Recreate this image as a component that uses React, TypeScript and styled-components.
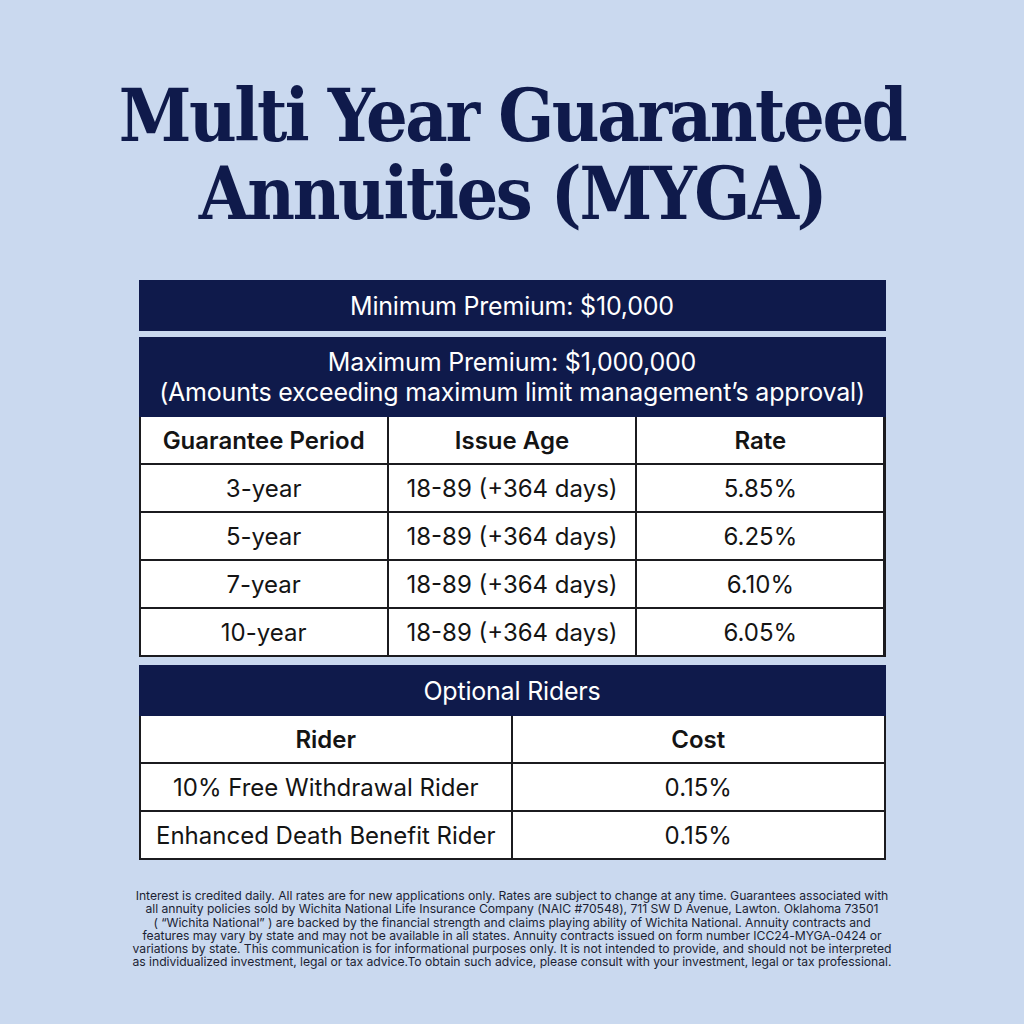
import styled, { createGlobalStyle } from 'styled-components';

const GlobalStyle = createGlobalStyle`
  html, body {
    margin: 0;
    padding: 0;
    background: #cad9ef;
  }
`;

const rates = [
  { period: '3-year', age: '18-89 (+364 days)', rate: '5.85%' },
  { period: '5-year', age: '18-89 (+364 days)', rate: '6.25%' },
  { period: '7-year', age: '18-89 (+364 days)', rate: '6.10%' },
  { period: '10-year', age: '18-89 (+364 days)', rate: '6.05%' },
];

const riders = [
  { name: '10% Free Withdrawal Rider', cost: '0.15%' },
  { name: 'Enhanced Death Benefit Rider', cost: '0.15%' },
];

const disclaimer = [
  'Interest is credited daily. All rates are for new applications only. Rates are subject to change at any time. Guarantees associated with',
  'all annuity policies sold by Wichita National Life Insurance Company (NAIC #70548), 711 SW D Avenue, Lawton. Oklahoma 73501',
  '( “Wichita National” ) are backed by the financial strength and claims playing ability of Wichita National. Annuity contracts and',
  'features may vary by state and may not be available in all states. Annuity contracts issued on form number ICC24-MYGA-0424 or',
  'variations by state. This communication is for informational purposes only. It is not intended to provide, and should not be interpreted',
  'as individualized investment, legal or tax advice.To obtain such advice, please consult with your investment, legal or tax professional.',
];

const App = () => {
  return (
    <>
      <GlobalStyle />
      <Page>
        <Title>
          Multi Year Guaranteed
          <br />
          Annuities (MYGA)
        </Title>
        <Tables>
          <NavyBar>Minimum Premium: $10,000</NavyBar>
          <Block>
            <NavyBar $tall>
              Maximum Premium: $1,000,000
              <br />
              (Amounts exceeding maximum limit management’s approval)
            </NavyBar>
            <Grid $cols={3}>
              <HeadCell>Guarantee Period</HeadCell>
              <HeadCell>Issue Age</HeadCell>
              <HeadCell>Rate</HeadCell>
              {rates.map((r) => (
                <Row key={r.period}>
                  <Cell>{r.period}</Cell>
                  <Cell>{r.age}</Cell>
                  <Cell>{r.rate}</Cell>
                </Row>
              ))}
            </Grid>
          </Block>
          <Block $gap>
            <NavyBar>Optional Riders</NavyBar>
            <Grid $cols={2}>
              <HeadCell>Rider</HeadCell>
              <HeadCell>Cost</HeadCell>
              {riders.map((r) => (
                <Row key={r.name}>
                  <Cell>{r.name}</Cell>
                  <Cell>{r.cost}</Cell>
                </Row>
              ))}
            </Grid>
          </Block>
        </Tables>
        <Disclaimer>
          {disclaimer.map((line) => (
            <div key={line}>{line}</div>
          ))}
        </Disclaimer>
      </Page>
    </>
  );
};

export default App;

const Page = styled.div`
  width: 1024px;
  height: 1024px;
  box-sizing: border-box;
  padding-top: 76px;
  display: flex;
  flex-direction: column;
  align-items: center;
  background: #cad9ef;
  font-family: Inter, Lato, sans-serif;
`;

const Title = styled.h1`
  margin: 0;
  font-family: 'DejaVu Serif', serif;
  font-stretch: condensed;
  font-weight: 700;
  font-size: 73px;
  line-height: 78px;
  letter-spacing: -2.4px;
  color: #0f1a4b;
  text-align: center;
`;

const Tables = styled.div`
  width: 747px;
  margin-top: 48px;
  display: flex;
  flex-direction: column;
  gap: 6px;
`;

const Block = styled.div<{ $gap?: boolean }>`
  display: flex;
  flex-direction: column;
  margin-top: ${(p) => (p.$gap ? '2px' : '0')};
`;

const NavyBar = styled.div<{ $tall?: boolean }>`
  height: ${(p) => (p.$tall ? '80px' : '51px')};
  background: #0f1a4b;
  color: #ffffff;
  font-size: 25px;
  line-height: 30px;
  font-weight: 400;
  letter-spacing: -0.2px;
  display: flex;
  align-items: center;
  justify-content: center;
  text-align: center;
`;

const Grid = styled.div<{ $cols: number }>`
  display: grid;
  grid-template-columns: repeat(${(p) => p.$cols}, 1fr);
  grid-auto-rows: 46px;
  gap: 2px;
  padding: 0 2px 2px;
  background: #1b1b1f;
`;

const Row = styled.div`
  display: contents;
`;

const Cell = styled.div`
  background: #ffffff;
  color: #141414;
  font-size: 24px;
  font-weight: 400;
  display: flex;
  align-items: center;
  justify-content: center;
`;

const HeadCell = styled(Cell)`
  font-weight: 600;
`;

const Disclaimer = styled.div`
  margin-top: 29px;
  font-size: 12.2px;
  line-height: 13.3px;
  color: #1c1f33;
  text-align: center;
  letter-spacing: -0.05px;
`;
